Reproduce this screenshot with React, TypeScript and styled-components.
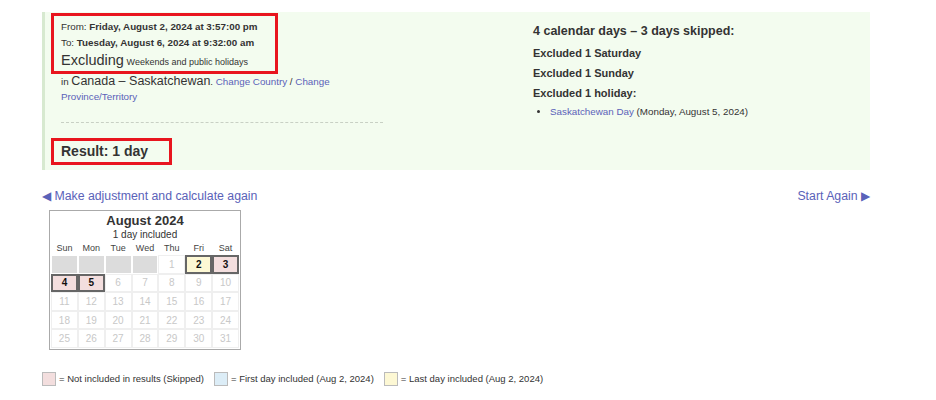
import React from "react";
import styled, { createGlobalStyle } from "styled-components";

const Global = createGlobalStyle`
  html, body { margin: 0; padding: 0; background: #fff; }
  body { font-family: "Liberation Sans", Arial, sans-serif; color: #333; }
`;

const Page = styled.div`
  width: 936px;
  height: 400px;
  padding: 12px 66px 0 42px;
  box-sizing: border-box;
`;

const Panel = styled.div`
  display: grid;
  grid-template-columns: 488px 1fr;
  background: #f3fcef;
  border-left: 3px solid #d7e9d0;
  height: 158px;
  box-sizing: border-box;
`;

const LeftCol = styled.div`
  padding: 1px 0 0 6px;
  display: flex;
  flex-direction: column;
  align-items: flex-start;
`;

const Annot = styled.div<{ $pad: string }>`
  border: 3px solid #e8151e;
  padding: ${(p) => p.$pad};
  box-sizing: border-box;
`;

const Line = styled.div<{ $h?: number }>`
  font-size: 9.8px;
  line-height: ${(p) => p.$h ?? 16}px;
  white-space: nowrap;
`;

const Small = styled.span`
  font-size: 9px;
`;

const Big = styled.span<{ $s: number }>`
  font-size: ${(p) => p.$s}px;
`;

const Link = styled.a`
  color: #5a62b9;
  text-decoration: none;
  cursor: pointer;
`;

const Rest = styled.div`
  padding-left: 10px;
  font-size: 9.8px;
  line-height: 15px;
  width: 272px;
  white-space: nowrap;
`;

const Dashed = styled.div`
  margin: 18px 0 0 10px;
  width: 322px;
  border-top: 1px dashed #c8d0c4;
`;

const ResultBox = styled(Annot)`
  margin-top: 15px;
  font-size: 14px;
  font-weight: bold;
  line-height: 21px;
`;

const RightCol = styled.div`
  padding-top: 9px;
  font-weight: bold;
  font-size: 11px;
`;

const Heading = styled.div<{ $mb: number; $s?: number }>`
  line-height: 20px;
  font-size: ${(p) => p.$s ?? 11}px;
  margin-bottom: ${(p) => p.$mb}px;
`;

const HolidayList = styled.ul`
  margin: 1px 0 0 0;
  padding: 0 0 0 17px;
  font-size: 9.8px;
  font-weight: normal;
  line-height: 16px;
  li { list-style: disc; }
`;

const NavRow = styled.div`
  display: flex;
  justify-content: space-between;
  margin-top: 19px;
  font-size: 12.3px;
  line-height: 15px;
`;

const Calendar = styled.div`
  margin: 6px 0 0 7px;
  width: 192px;
  border: 1px solid #aaa;
  box-sizing: border-box;
  background: #fff;
  padding: 2px 1px 1px 1px;
`;

const CalTitle = styled.div`
  text-align: center;
  font-weight: bold;
  font-size: 13px;
  line-height: 15px;
`;

const CalSub = styled.div`
  text-align: center;
  font-size: 10px;
  line-height: 13px;
`;

const Grid = styled.div`
  display: grid;
  grid-template-columns: repeat(7, 1fr);
`;

const Dow = styled.div`
  text-align: center;
  font-size: 9px;
  line-height: 14px;
  color: #444;
`;

type Kind = "empty" | "off" | "skip" | "last";

const Cell = styled.div<{ $k: Kind }>`
  height: 18.6px;
  box-sizing: border-box;
  display: flex;
  align-items: center;
  justify-content: center;
  font-size: 10px;
  ${(p) =>
    p.$k === "empty"
      ? `background:#dcdcdc; border:1px solid #fff;`
      : p.$k === "off"
      ? `color:#c8c8c8; border:1px solid #efefef;`
      : p.$k === "skip"
      ? `background:#f3dede; border:2px solid #666; font-weight:bold; color:#111;`
      : `background:#fdf8d4; border:2px solid #666; font-weight:bold; color:#111;`}
`;

const Legend = styled.div`
  display: flex;
  align-items: center;
  margin-top: 22px;
  font-size: 9.5px;
  gap: 3px;
`;

const Swatch = styled.span<{ $c: string }>`
  display: inline-block;
  width: 12px;
  height: 12px;
  border: 1px solid #bbb;
  background: ${(p) => p.$c};
`;

const LegendText = styled.span`
  margin-right: 7px;
`;

const days: { d: string; k: Kind }[] = [
  ...Array(4).fill(0).map(() => ({ d: "", k: "empty" as Kind })),
  { d: "1", k: "off" },
  { d: "2", k: "last" },
  { d: "3", k: "skip" },
  { d: "4", k: "skip" },
  { d: "5", k: "skip" },
  ...Array.from({ length: 26 }, (_, i) => ({ d: String(i + 6), k: "off" as Kind })),
];

export default function App() {
  return (
    <>
      <Global />
      <Page>
        <Panel>
          <LeftCol>
            <Annot $pad="3px 17px 0 7px">
              <Line>From: <b>Friday, August 2, 2024 at 3:57:00 pm</b></Line>
              <Line>To: <b>Tuesday, August 6, 2024 at 9:32:00 am</b></Line>
              <Line $h={18}><Big $s={14.5}>Excluding</Big> <Small>Weekends and public holidays</Small></Line>
            </Annot>
            <Rest>
              in <Big $s={12.5}>Canada – Saskatchewan</Big>. <Link>Change Country</Link> / <Link>Change</Link>
              <br />
              <Link>Province/Territory</Link>
            </Rest>
            <Dashed />
            <ResultBox $pad="0 21px 0 7px">Result: 1 day</ResultBox>
          </LeftCol>
          <RightCol>
            <Heading $mb={2} $s={12.5}>4 calendar days – 3 days skipped:</Heading>
            <Heading $mb={0}>Excluded 1 Saturday</Heading>
            <Heading $mb={0}>Excluded 1 Sunday</Heading>
            <Heading $mb={0}>Excluded 1 holiday:</Heading>
            <HolidayList>
              <li><Link>Saskatchewan Day</Link> (Monday, August 5, 2024)</li>
            </HolidayList>
          </RightCol>
        </Panel>
        <NavRow>
          <Link>◀ Make adjustment and calculate again</Link>
          <Link>Start Again ▶</Link>
        </NavRow>
        <Calendar>
          <CalTitle>August 2024</CalTitle>
          <CalSub>1 day included</CalSub>
          <Grid>
            {["Sun", "Mon", "Tue", "Wed", "Thu", "Fri", "Sat"].map((d) => (
              <Dow key={d}>{d}</Dow>
            ))}
            {days.map((c, i) => (
              <Cell key={i} $k={c.k}>{c.d}</Cell>
            ))}
          </Grid>
        </Calendar>
        <Legend>
          <Swatch $c="#f3dede" />
          <LegendText>= Not included in results (Skipped)</LegendText>
          <Swatch $c="#dcedf7" />
          <LegendText>= First day included (Aug 2, 2024)</LegendText>
          <Swatch $c="#fdf8d4" />
          <LegendText>= Last day included (Aug 2, 2024)</LegendText>
        </Legend>
      </Page>
    </>
  );
}
